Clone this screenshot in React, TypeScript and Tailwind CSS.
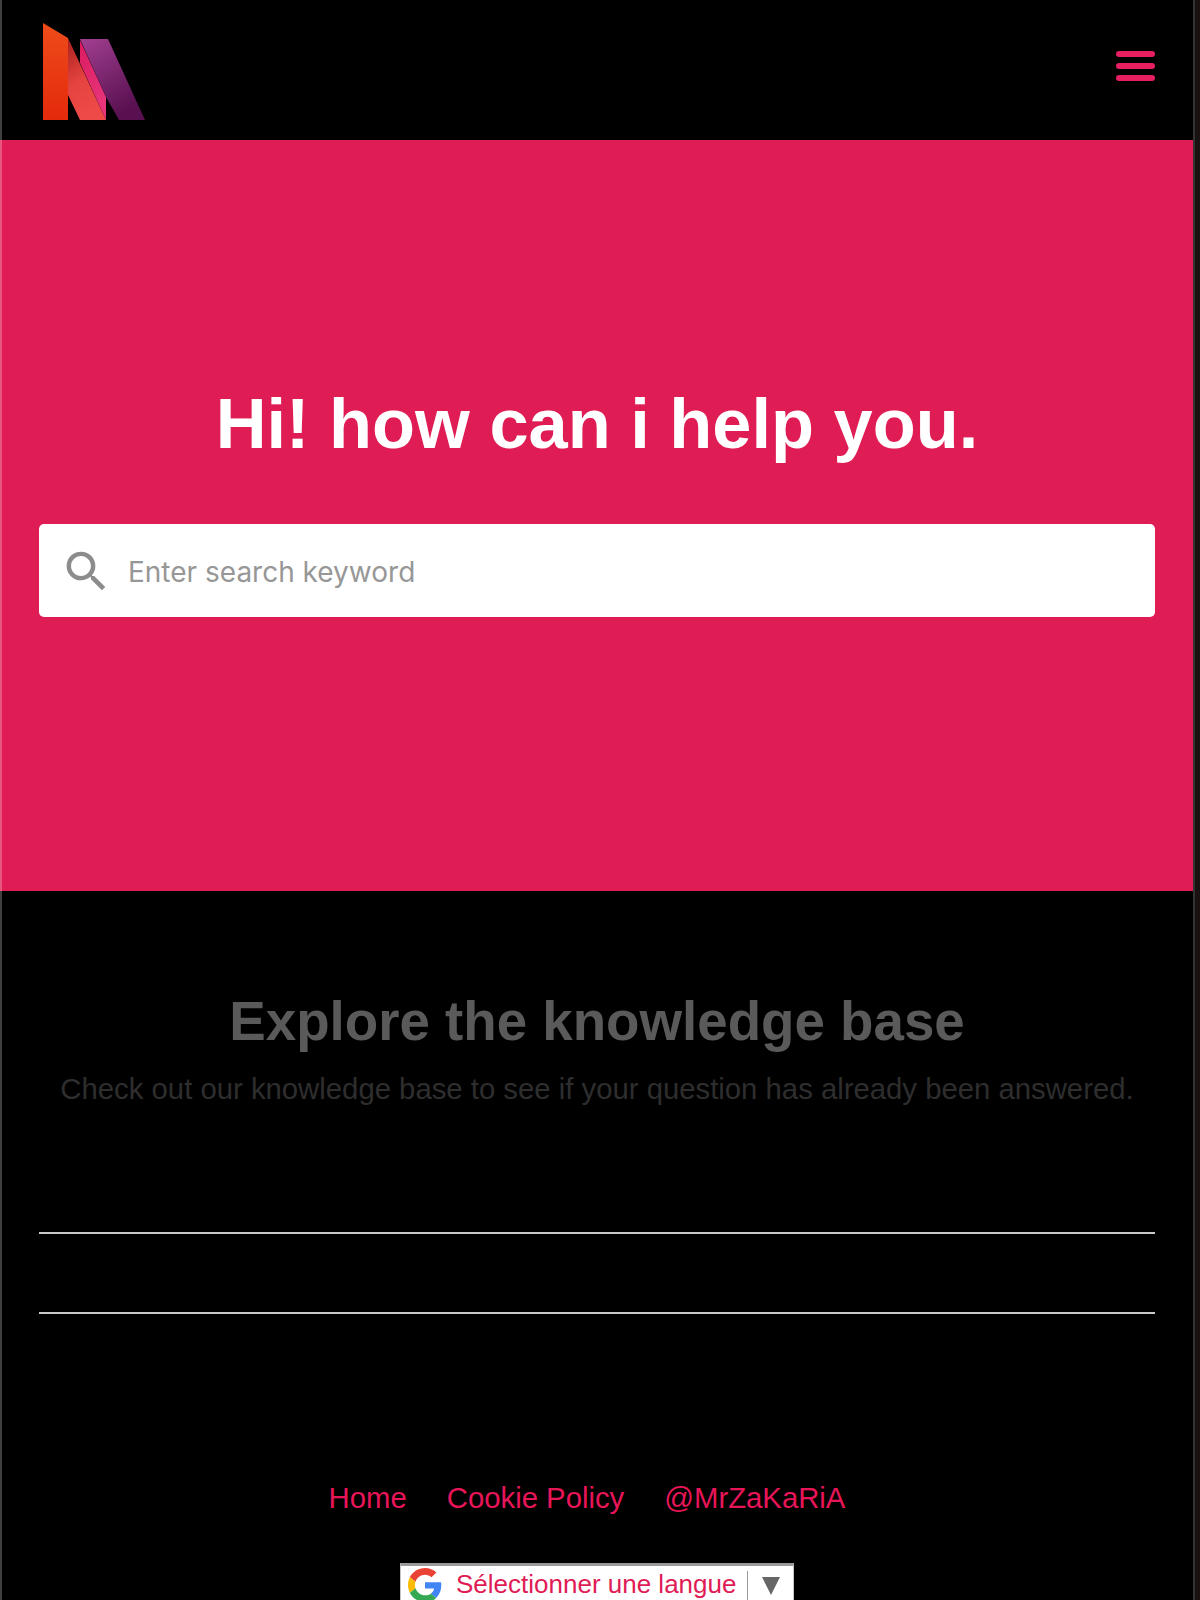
import { MdSearch } from 'react-icons/md';

function Logo() {
    return (
        <svg width="106" height="100" viewBox="0 0 106 100" className="block">
            <defs>
                <linearGradient id="logoRed" x1="0" y1="0" x2="0" y2="1">
                    <stop offset="0" stopColor="#ee4c1a" />
                    <stop offset="1" stopColor="#e42a0c" />
                </linearGradient>
                <linearGradient id="logoCoral" x1="0" y1="0" x2="0.3" y2="1">
                    <stop offset="0" stopColor="#a8201c" />
                    <stop offset="0.55" stopColor="#e4433f" />
                    <stop offset="1" stopColor="#ee4a48" />
                </linearGradient>
                <linearGradient id="logoPink" x1="0" y1="0" x2="0.3" y2="1">
                    <stop offset="0" stopColor="#dc1a60" />
                    <stop offset="1" stopColor="#e8357a" />
                </linearGradient>
                <linearGradient id="logoPurple" x1="0" y1="0" x2="0.5" y2="1">
                    <stop offset="0" stopColor="#a23f90" />
                    <stop offset="1" stopColor="#581050" />
                </linearGradient>
            </defs>
            <path d="M0 0 L25 15 L25 97 L0 97 Z" fill="url(#logoRed)" />
            <path d="M25 15 L63 97 L37 97 L25 72 Z" fill="url(#logoCoral)" />
            <path d="M37 17 L63 74 L63 97 L37 40 Z" fill="url(#logoPink)" />
            <path d="M37 16 L65 16 L102 97 L76 97 L63 74 Z" fill="url(#logoPurple)" />
        </svg>
    );
}

function GoogleG() {
    return (
        <svg width="34" height="34" viewBox="0 0 48 48" className="shrink-0">
            <path fill="#EA4335" d="M24 9.500c3.500 0 6.700 1.200 9.200 3.600l6.900-6.900C35.900 2.400 30.500 0 24 0 14.600 0 6.500 5.400 2.600 13.200l8 6.200C12.500 13.600 17.800 9.500 24 9.500z" />
            <path fill="#4285F4" d="M47 24.500c0-1.600-.1-3.100-.4-4.500H24v9h12.900c-.6 3-2.200 5.500-4.800 7.200l7.700 6C44.400 37.900 47 31.800 47 24.500z" />
            <path fill="#FBBC05" d="M10.600 28.600c-.5-1.400-.8-3-.8-4.600s.3-3.200.8-4.600l-8-6.200C.9 16.500 0 20.100 0 24s.9 7.500 2.600 10.800l8-6.200z" />
            <path fill="#34A853" d="M24 48c6.500 0 11.900-2.100 15.900-5.800l-7.700-6c-2.200 1.400-4.900 2.300-8.200 2.300-6.200 0-11.500-4.100-13.400-9.900l-8 6.200C6.500 42.600 14.600 48 24 48z" />
        </svg>
    );
}

export default function App() {
    return (
        <div className="h-screen overflow-hidden bg-black flex relative font-['Liberation_Sans',Arial,sans-serif]">
            <div className="flex-1 min-w-0">
                <header className="h-[140px] flex items-start justify-between pl-[43px] pr-[38px] pt-[23px]">
                    <Logo />
                    <div className="flex flex-col gap-[6px] w-[39px] mt-[28px]">
                        <span className="h-[6px] rounded-full bg-[#e81f5f]"></span>
                        <span className="h-[6px] rounded-full bg-[#e81f5f]"></span>
                        <span className="h-[6px] rounded-full bg-[#e81f5f]"></span>
                    </div>
                </header>

                <section className="h-[751px] bg-[#e01c55] pl-[39px] pr-[38px] pt-[238px]">
                    <h1 className="text-center text-white font-bold text-[70.4px] leading-[92px]">Hi! how can i help you.</h1>
                    <div className="mt-[54px] h-[93px] rounded-[5px] bg-white flex items-center pl-[21px]">
                        <MdSearch size={53} className="text-[#8c8c8c] shrink-0 translate-y-[1px]" />
                        <span className="ml-[15px] text-[28px] text-[#979797] font-['Inter',sans-serif] translate-y-[1px]">Enter search keyword</span>
                    </div>
                </section>

                <section className="pl-[39px] pr-[38px] pt-[95px]">
                    <h2 className="text-center font-bold text-[54.700px] leading-[70px] text-[#5a5a5a]">Explore the knowledge base</h2>
                    <p className="text-center mt-[13px] text-[29.300px] leading-[40px] text-[#2e2e2e] whitespace-nowrap">Check out our knowledge base to see if your question has already been answered.</p>
                    <div className="mt-[123px] h-[2px] bg-[#c8c8c8]"></div>
                    <div className="mt-[78px] h-[2px] bg-[#c8c8c8]"></div>
                </section>

                <nav className="mt-[164px] pr-[19px] flex justify-center gap-[40px] text-[29.300px] leading-[40px] text-[#e81558]">
                    <span>Home</span>
                    <span>Cookie Policy</span>
                    <span>@MrZaKaRiA</span>
                </nav>

                <div className="mt-[45px] ml-[400px] w-[394px] h-[60px] bg-white border-x border-x-[#c4c4c4] border-t-[3px] border-t-[#9a9a9a] flex items-start pl-[7px] pt-[2px]">
                    <GoogleG />
                    <span className="ml-[14px] text-[26px] leading-[32px] text-[#e01c55] whitespace-nowrap">Sélectionner une langue</span>
                    <span className="ml-[11px] mt-[3px] h-[30px] w-px bg-[#9a9a9a]"></span>
                    <svg width="18" height="18" viewBox="0 0 18 18" className="ml-[14px] mt-[9px]">
                        <path d="M0 0 H18 L9 18 Z" fill="#666666" />
                    </svg>
                </div>
            </div>
            <div className="w-[7px] shrink-0 border-l-2 border-[#333333] bg-[#1a1210]"></div>
            <div className="absolute left-0 top-0 bottom-0 w-[2px] bg-white/25"></div>
        </div>
    );
}
